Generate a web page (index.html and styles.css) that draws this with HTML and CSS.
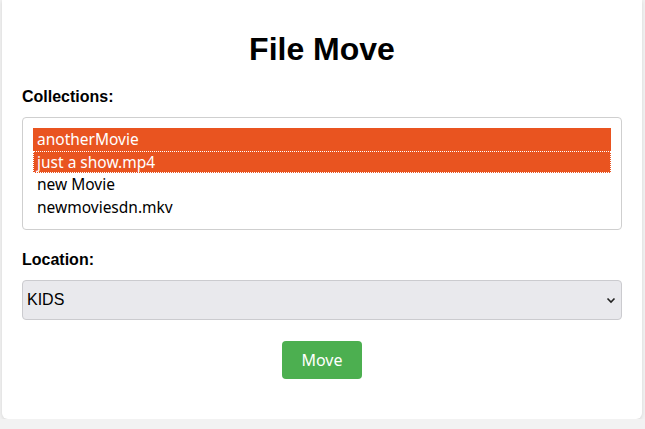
FILE: index.html
```html
<!DOCTYPE html>
<html>
<head>
<meta charset="utf-8">
<link rel="stylesheet" href="styles.css">
</head>
<body>
<div class="card">
  <h1 class="title">File Move</h1>
  <div class="label">Collections:</div>
  <div class="listbox">
    <div class="opt sel">anotherMovie</div>
    <div class="opt sel focus">just a show.mp4</div>
    <div class="opt">new Movie</div>
    <div class="opt">newmoviesdn.mkv</div>
  </div>
  <div class="label second">Location:</div>
  <div class="select">
    <span>KIDS</span>
    <svg class="chev" width="10" height="7" viewBox="0 0 10 7"><path d="M1.5 1.5 L5 5 L8.5 1.5" fill="none" stroke="#222" stroke-width="1.6"/></svg>
  </div>
  <div class="actions">
    <div class="btn">Move</div>
  </div>
</div>
</body>
</html>
```
FILE: styles.css
```css
html, body { margin: 0; padding: 0; }
body {
  background: #f2f2f2;
  font-family: "Liberation Sans", Arial, sans-serif;
  color: #000;
}
.card {
  width: 640px;
  margin: 0 0 0 2px;
  background: #fff;
  border-radius: 0 0 6px 6px;
  box-shadow: 0 1px 4px rgba(0,0,0,0.12);
  padding: 31px 20px 40px;
  box-sizing: border-box;
}
.title {
  margin: 0 0 20px;
  font-size: 32px;
  line-height: 37px;
  text-align: center;
  font-weight: bold;
}
.label {
  font-weight: bold;
  font-size: 16px;
  line-height: 18px;
  margin-bottom: 11px;
}
.label.second { margin-top: 21px; margin-bottom: 11px; }
.listbox {
  border: 1px solid #cfcfcf;
  border-radius: 4px;
  padding: 10px 10px 11px;
  font-family: "Noto Sans", "Open Sans", sans-serif;
  font-size: 15.5px;
}
.opt {
  height: 22.6px;
  line-height: 22px;
  padding-left: 4px;
  white-space: nowrap;
}
.opt.sel { background: #e95420; color: #fff; }
.opt.focus { outline: 1px dotted #fff; outline-offset: -1px; }
.select {
  height: 40px;
  box-sizing: border-box;
  background: #e9e9ed;
  border: 1px solid #cbcbcf;
  border-radius: 4px;
  display: flex;
  align-items: center;
  justify-content: space-between;
  padding: 0 5px 0 4px;
  font-size: 16px;
}
.chev { display: block; }
.actions {
  display: flex;
  justify-content: center;
  margin-top: 21px;
}
.btn {
  width: 80px;
  height: 38px;
  background: #4caf50;
  color: #fff;
  border-radius: 4px;
  display: flex;
  align-items: center;
  justify-content: center;
  font-family: "Noto Sans", "Open Sans", sans-serif;
  font-size: 16px;
}
```
